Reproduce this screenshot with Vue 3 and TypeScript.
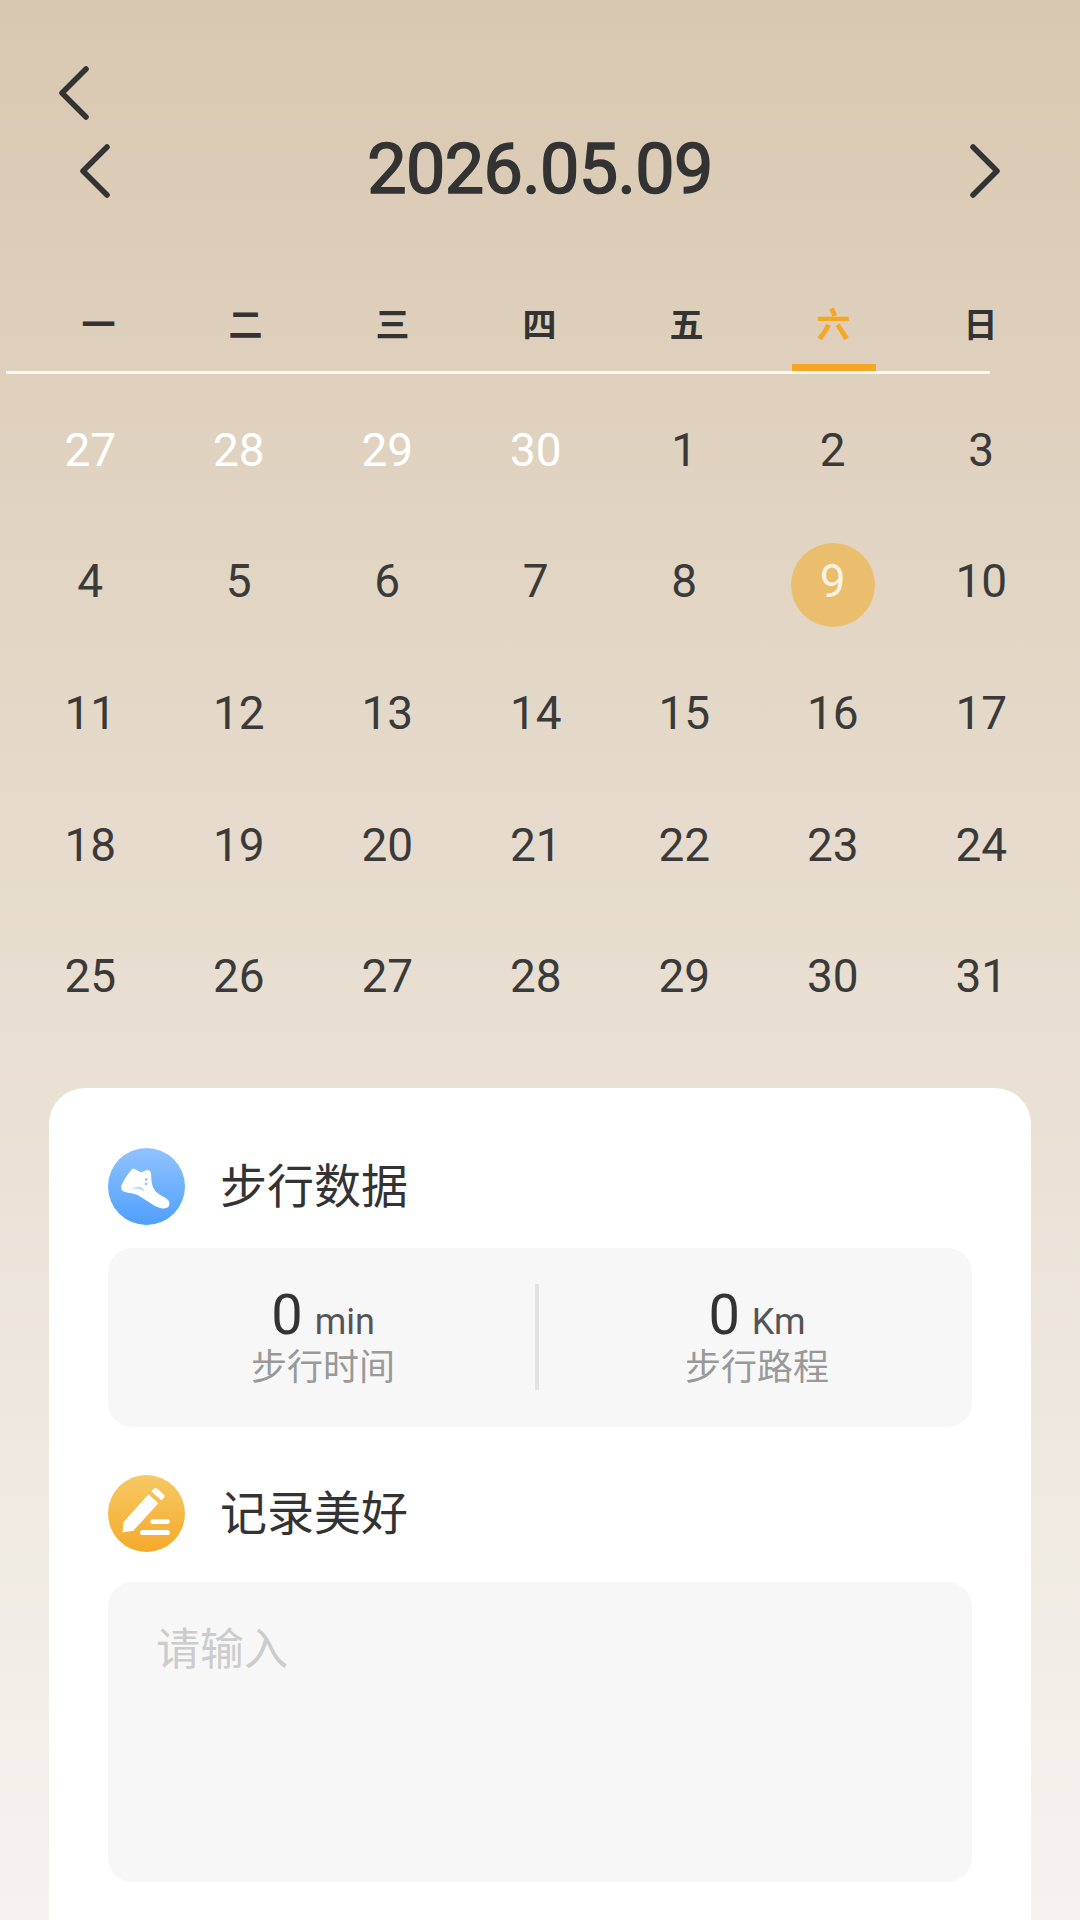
<template>
  <div class="page">
    <header class="top">
      <button class="chev back" aria-label="返回">
        <svg width="30" height="54" viewBox="0 0 30 54"><path d="M27 3 3 27l24 24" /></svg>
      </button>
      <div class="date-bar">
        <button class="chev" aria-label="上一天">
          <svg width="30" height="54" viewBox="0 0 30 54"><path d="M27 3 3 27l24 24" /></svg>
        </button>
        <h1>2026.05.09</h1>
        <button class="chev" aria-label="下一天">
          <svg width="30" height="54" viewBox="0 0 30 54"><path d="M3 3l24 24L3 51" /></svg>
        </button>
      </div>
    </header>

    <div class="week">
      <div v-for="(w, i) in weekdays" :key="w" class="week-cell" :class="{ active: i === 5 }">
        <span class="week-label">{{ w }}</span>
        <span class="week-bar"></span>
      </div>
    </div>

    <div class="days">
      <div v-for="(d, i) in days" :key="i" class="day" :class="{ muted: i < 4 }">
        <span class="num" :class="{ selected: d === 9 && i > 4 }">{{ d }}</span>
      </div>
    </div>

    <section class="card">
      <div class="card-head">
        <svg class="badge" viewBox="55 52 228 228">
          <defs>
            <linearGradient id="blue" x1="0" y1="0" x2="0" y2="1">
              <stop offset="0" stop-color="#91c3ff" />
              <stop offset="1" stop-color="#4f9fff" />
            </linearGradient>
          </defs>
          <circle cx="169" cy="166" r="114" fill="url(#blue)" />
          <path fill="#fff" d="M128 113c8 0 15 9 24 11 8 1 14-9 22-7 7 2 9 8 9 16 0 14 1 30 11 45 9 12 28 19 38 27 6 5 7 15 2 21-6 6-18 6-29 2-24-9-42-27-63-37-14-7-31-5-42-11-8-5-7-14-3-22 7-14 18-31 31-45z" />
          <path fill="#b5d7ff" d="M124 174c10-7 22-10 30-5 5 3 8 8 9 13-6-5-12-9-20-10-7-1-13 0-19 2z" />
          <circle cx="168" cy="145" r="4" fill="#8fc0ff" />
          <circle cx="168" cy="158" r="4" fill="#8fc0ff" />
        </svg>
        <h2>步行数据</h2>
      </div>
      <div class="stats">
        <div class="stat">
          <div class="value"><b>0</b><span>min</span></div>
          <div class="label">步行时间</div>
        </div>
        <i class="divider"></i>
        <div class="stat">
          <div class="value"><b>0</b><span>Km</span></div>
          <div class="label">步行路程</div>
        </div>
      </div>

      <div class="card-head second">
        <svg class="badge" viewBox="55 52 228 228">
          <defs>
            <linearGradient id="amber" x1="0" y1="0" x2="0" y2="1">
              <stop offset="0" stop-color="#f6c964" />
              <stop offset="1" stop-color="#f5a92b" />
            </linearGradient>
          </defs>
          <circle cx="169" cy="166" r="114" fill="url(#amber)" />
          <path fill="#fff" d="M98 222l3-31 74-82 29 27-74 81z" />
          <path fill="#fff" d="M183 100l9-8c3-2 6-2 8 0l20 18c3 3 3 6 1 9l-8 8z" />
          <rect x="180" y="183" width="58" height="14" rx="7" fill="#fff" />
          <rect x="150" y="215" width="88" height="15" rx="7.5" fill="#fff" />
        </svg>
        <h2>记录美好</h2>
      </div>
      <textarea class="note" placeholder="请输入"></textarea>
    </section>
  </div>
</template>

<script setup lang="ts">
const weekdays = ['一', '二', '三', '四', '五', '六', '日']

// 4 trailing days of April, then May
const days: number[] = [27, 28, 29, 30]
for (let d = 1; d <= 31; d++) days.push(d)
</script>

<style>
html,
body {
  margin: 0;
}
</style>

<style scoped>
.page {
  height: 1920px;
  overflow: hidden;
  font-family: Roboto, "Noto Sans CJK SC", sans-serif;
  color: #333;
  background: linear-gradient(180deg, #d9c8b1 0%, #f6f3ef 100%);
}

.top {
  padding: 66px 0 0;
}

.chev {
  display: block;
  padding: 0;
  border: 0;
  background: none;
}
.chev svg {
  display: block;
}
.chev path {
  fill: none;
  stroke: #333;
  stroke-width: 5.5;
  stroke-linecap: round;
  stroke-linejoin: round;
}
.back {
  margin-left: 59px;
}

.date-bar {
  display: flex;
  align-items: center;
  justify-content: space-between;
  padding: 24px 80px 0;
  height: 54px;
}
.date-bar h1 {
  margin: 0 0 4px;
  font-size: 70px;
  line-height: 54px;
  font-weight: 400;
  letter-spacing: -0.6px;
  -webkit-text-stroke: 1.6px #333;
}

.week {
  display: grid;
  grid-template-columns: repeat(7, 147px);
  width: 984px;
  margin: 102px 0 0 6px;
  padding-left: 19px;
  box-sizing: border-box;
  border-bottom: 3px solid #fbf8f3;
}
.week-cell {
  display: flex;
  flex-direction: column;
  align-items: center;
}
.week-label {
  font-size: 34px;
  line-height: 50px;
  font-weight: 700;
}
.week-bar {
  width: 84px;
  height: 7px;
  margin-top: 14px;
}
.week-cell.active .week-label {
  color: #f5a623;
}
.week-cell.active .week-bar {
  background: #f5a623;
}

.days {
  display: grid;
  grid-template-columns: repeat(7, 148.5px);
  grid-auto-rows: 131.6px;
  margin-top: 14px;
  padding-left: 16px;
}
.day {
  display: flex;
  align-items: center;
  justify-content: center;
}
.num {
  display: flex;
  align-items: center;
  justify-content: center;
  width: 84px;
  height: 84px;
  padding-bottom: 8px;
  box-sizing: border-box;
  border-radius: 50%;
  font-size: 46px;
  font-weight: 400;
  color: #3a3a3a;
}
.muted .num {
  color: #fff;
}
.num.selected {
  color: #faf2e2;
  background: #ebbe6e;
}

.card {
  margin: 42px 49px 0;
  padding: 60px 59px;
  height: 900px;
  box-sizing: border-box;
  border-radius: 36px;
  background: #fff;
}
.card-head {
  display: flex;
  align-items: center;
  gap: 35px;
}
.card-head.second {
  margin-top: 48px;
}
.badge {
  flex: none;
  width: 77px;
  height: 77px;
}
.card-head h2 {
  margin: 0;
  font-size: 47px;
  line-height: 77px;
  font-weight: 400;
}

.stats {
  display: flex;
  align-items: center;
  height: 179px;
  margin-top: 23px;
  border-radius: 24px;
  background: #f7f7f7;
}
.stat {
  flex: 1;
  text-align: center;
}
.value {
  height: 62px;
  line-height: 62px;
}
.value b {
  font-size: 56px;
  font-weight: 400;
}
.value span {
  margin-left: 12px;
  font-size: 36px;
  font-weight: 400;
  color: #555;
}
.label {
  font-size: 36px;
  line-height: 45px;
  color: #999;
}
.divider {
  flex: none;
  width: 4px;
  height: 106px;
  margin: 0 3px 0 -3px;
  background: #e2e2e2;
}

.note {
  display: block;
  width: 100%;
  height: 300px;
  margin-top: 30px;
  padding: 40px 48px;
  box-sizing: border-box;
  border: 0;
  border-radius: 24px;
  outline: none;
  resize: none;
  font: inherit;
  font-size: 44px;
  line-height: 56px;
  background: #f7f7f7;
}
.note::placeholder {
  color: #ccc;
}
</style>
